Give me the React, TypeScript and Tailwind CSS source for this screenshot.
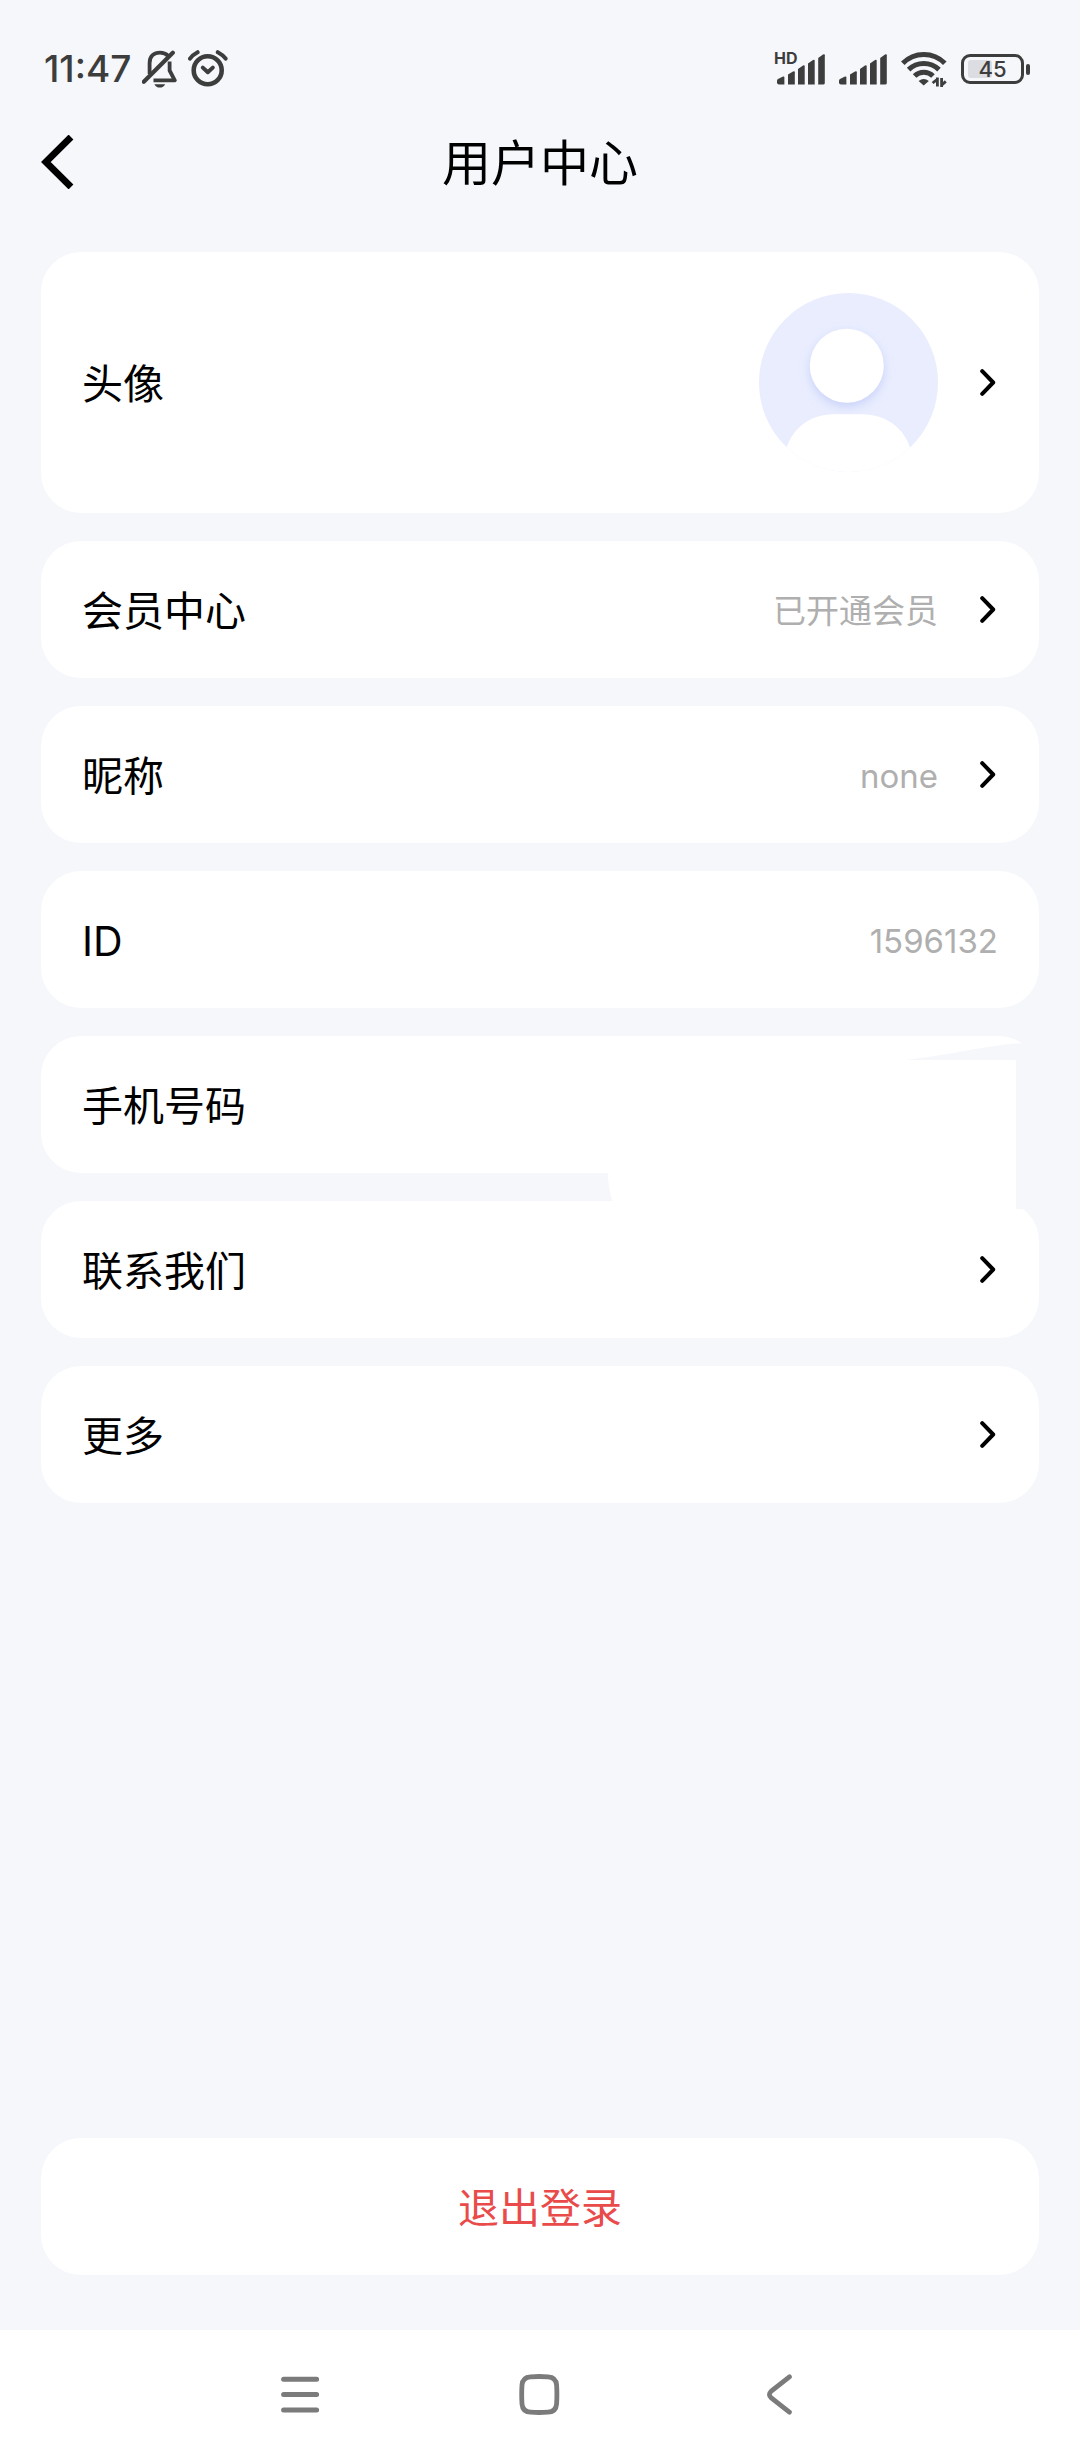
import type { ReactNode } from "react";

function SignalBars() {
  return (
    <svg width="48" height="32" viewBox="0 0 48 32" fill="#3d3d3d" aria-hidden="true">
      <path d="M0 29.5V28Q0 26.5 1 26L6 23.6Q7.4 23.2 7.4 24.6V31.5H2Q0 31.5 0 29.5Z" />
      <path d="M11 31.5V21.6L16 18.4Q17.8 17.6 17.8 19.2V31.5Z" />
      <path d="M21 31.5V16L26 12.6Q27.7 11.8 27.7 13.4V31.5Z" />
      <path d="M31 31.5V10.4L36 7Q37.7 6.2 37.7 7.8V31.5Z" />
      <path d="M41.2 31.5V5L46 1.4Q47.8 .6 47.8 2.2V30Q47.8 31.5 46 31.5Z" />
    </svg>
  );
}

function BellOffIcon() {
  return (
    <svg width="35" height="38" viewBox="0 0 35 38" fill="none" stroke="#3d3d3d" strokeWidth="3.8" aria-hidden="true">
      <path d="M7.6 24V13C7.6 6 12 2.6 18 2.6C21.5 2.6 24 3.6 26.2 5.8" />
      <path d="M27.6 11.5V20.5L32.8 30.4H11.5" strokeLinejoin="round" />
      <path d="M1.8 31.8L30.8 2.8" strokeWidth="4.2" strokeLinecap="round" />
      <path d="M12.4 34.2H23.2Q21.5 37.6 17.8 37.6T12.4 34.2Z" fill="#3d3d3d" stroke="none" />
    </svg>
  );
}

function AlarmIcon() {
  return (
    <svg width="40" height="38" viewBox="0 0 40 38" fill="none" stroke="#3d3d3d" strokeWidth="4" strokeLinecap="round" aria-hidden="true">
      <circle cx="19.7" cy="20.2" r="14" strokeWidth="4.6" />
      <path d="M14.8 17.6L19.8 22.2L24.8 17.6" strokeLinejoin="round" />
      <path d="M2 8.6Q5 4.6 9.6 2.2M29.8 2.2Q34.4 4.6 37.6 8.6" />
    </svg>
  );
}

function WifiIcon() {
  return (
    <svg width="46" height="36" viewBox="0 0 46 36" fill="none" stroke="#3d3d3d" strokeWidth="5" aria-hidden="true">
      <path d="M1.8 12.2A29.4 29.4 0 0 1 43.8 12.2" />
      <path d="M7.6 18.6A21.7 21.7 0 0 1 38 18.6" />
      <path d="M13.6 25A13 13 0 0 1 32 25" />
      <path d="M17.6 30Q22.7 26 27.8 30L22.7 34.6Z" fill="#3d3d3d" stroke="none" />
      <path d="M36 28V35.4M40.8 36V28" stroke="#f5f7fb" strokeWidth="6" />
      <path d="M36.4 26.4V35.4M40.6 36V27M31.6 32L36 28.6M40.8 34L44.8 30.4" strokeWidth="2.8" />
    </svg>
  );
}

function ChevronIcon() {
  return (
    <svg className="ml-[42px] shrink-0" width="18" height="27" viewBox="0 0 18 27" fill="none" stroke="#000" strokeWidth="4" strokeLinecap="round" strokeLinejoin="round" aria-hidden="true">
      <path d="M2.2 2.2L13.2 13.5L2.2 24.8" />
    </svg>
  );
}

function Avatar() {
  return (
    <svg width="179" height="179" viewBox="0 0 179 179" role="img" aria-label="头像">
      <defs>
        <clipPath id="disc">
          <circle cx="89.5" cy="89.5" r="89.5" />
        </clipPath>
        <filter id="soft" x="-30%" y="-30%" width="160%" height="160%">
          <feDropShadow dx="0" dy="4" stdDeviation="5" floodColor="#b4c1f6" floodOpacity="0.6" />
        </filter>
      </defs>
      <g clipPath="url(#disc)">
        <rect width="179" height="179" fill="#e9edfe" />
        <circle cx="87.8" cy="72.7" r="37" fill="#fff" filter="url(#soft)" />
        <path d="M27.7 154.5C34 135 52 121.3 74 121.3H104C126 121.3 145 135 151 154.5H179V179H0V154.5Z" fill="#fff" />
      </g>
    </svg>
  );
}

// White brush mark that hides the phone number
function PhoneMask() {
  return (
    <svg className="absolute right-0 top-0 z-10" width="440" height="173" viewBox="0 0 440 173" aria-hidden="true">
      <path d="M306 24C352 19 396 8 422 7.5H440V173H417V24Z" fill="#f5f7fb" />
      <path d="M9 100V137C9 148 11 158 13.5 165V173H417V100Z" fill="#fff" />
    </svg>
  );
}

type RowProps = {
  label: string;
  value?: string;
  media?: ReactNode;
  link?: boolean;
  mask?: boolean;
};

const rowClass =
  "relative flex w-full items-center justify-between rounded-[40px] bg-white p-[41px] text-left";

function Row({ label, value, media, link, mask }: RowProps) {
  const content = (
    <>
      <span className="pt-1 text-[41px] leading-[51px] text-black">{label}</span>
      <span className="flex items-center">
        {media}
        {value && <span className="pt-1 text-[33px] leading-[51px] text-[#afafaf]">{value}</span>}
        {link && <ChevronIcon />}
      </span>
      {mask && <PhoneMask />}
    </>
  );

  return (
    <li>
      {link ? (
        <button type="button" className={rowClass}>{content}</button>
      ) : (
        <div className={rowClass}>{content}</div>
      )}
    </li>
  );
}

export default function App() {
  return (
    <div className="flex min-h-screen flex-col bg-[#f5f7fb] font-['Inter','Noto_Sans_CJK_SC',sans-serif]">
      {/* Status bar */}
      <div className="flex items-center justify-between pl-[44px] pr-[50px] pt-[45px] text-[#3d3d3d]">
        <div className="flex items-center gap-[11px]">
          <span className="text-[37px] font-medium leading-[48px]">11:47</span>
          <BellOffIcon />
          <AlarmIcon />
        </div>
        <div className="flex items-center gap-[14px]">
          <div className="relative pl-[2px]">
            <span className="absolute -left-[1px] -top-[3px] text-[16px] font-bold leading-[16px]">HD</span>
            <SignalBars />
          </div>
          <SignalBars />
          <WifiIcon />
          <div className="flex items-center gap-[2px]">
            <div className="relative flex h-[30px] w-[63px] items-center justify-center rounded-[9px] border-3 border-[#3d3d3d]">
              <span className="absolute left-[4px] top-[3px] h-[18px] w-[24px] rounded-[3px] bg-[#dcdde2]" />
              <span className="relative text-[22px] font-medium leading-[24px]">45</span>
            </div>
            <span className="h-[11px] w-[4px] rounded-[2px] bg-[#3d3d3d]" />
          </div>
        </div>
      </div>

      {/* Header */}
      <header className="grid h-[138px] grid-cols-[1fr_auto_1fr] items-center px-[41px]">
        <button type="button" aria-label="返回" className="justify-self-start">
          <svg width="33" height="54" viewBox="0 0 33 54" fill="none" stroke="#000" strokeWidth="6.8">
            <path d="M30 2L4.8 27L30 52" />
          </svg>
        </button>
        <h1 className="pt-1 text-[49px] leading-[60px] text-black">用户中心</h1>
      </header>

      {/* Settings list */}
      <main className="flex flex-1 flex-col px-[41px] pb-[55px] pt-[21px]">
        <ul className="flex flex-col gap-7">
          <Row label="头像" media={<Avatar />} link />
          <Row label="会员中心" value="已开通会员" link />
          <Row label="昵称" value="none" link />
          <Row label="ID" value="1596132" />
          <Row label="手机号码" mask />
          <Row label="联系我们" link />
          <Row label="更多" link />
        </ul>
        <button type="button" className="mt-auto rounded-[40px] bg-white p-[41px]">
          <span className="block pt-1 text-[41px] leading-[51px] text-[#e94b4b]">退出登录</span>
        </button>
      </main>

      {/* System navigation */}
      <nav className="flex justify-center bg-white pb-[45px] pt-[44px]">
        <button type="button" aria-label="最近任务" className="flex w-[240px] justify-center">
          <svg width="40" height="41" viewBox="0 0 40 41" stroke="#7b7b7b" strokeWidth="5" strokeLinecap="round">
            <path d="M3.6 5.2H36.6M3.6 20.6H36.6M3.6 36H36.6" />
          </svg>
        </button>
        <button type="button" aria-label="主屏幕" className="flex w-[240px] justify-center">
          <svg width="42" height="41" viewBox="0 0 42 41" fill="none" stroke="#7b7b7b" strokeWidth="4.8">
            <path d="M11.5 2.8Q20 2.2 29 2.8Q37 3.2 37.6 11Q38.2 20.5 37.6 30Q37 37.8 29 38.2Q20 38.8 11.5 38.2Q3.6 37.8 3 30Q2.4 20.5 3 11Q3.6 3.2 11.5 2.8Z" />
          </svg>
        </button>
        <button type="button" aria-label="后退" className="flex w-[240px] justify-center">
          <svg width="27" height="41" viewBox="0 0 27 41" fill="none" stroke="#7b7b7b" strokeWidth="4.8" strokeLinecap="round">
            <path d="M22.4 2.8L4 17.4Q.8 20.5 4 23.6L22.4 38.2" />
          </svg>
        </button>
      </nav>
    </div>
  );
}
